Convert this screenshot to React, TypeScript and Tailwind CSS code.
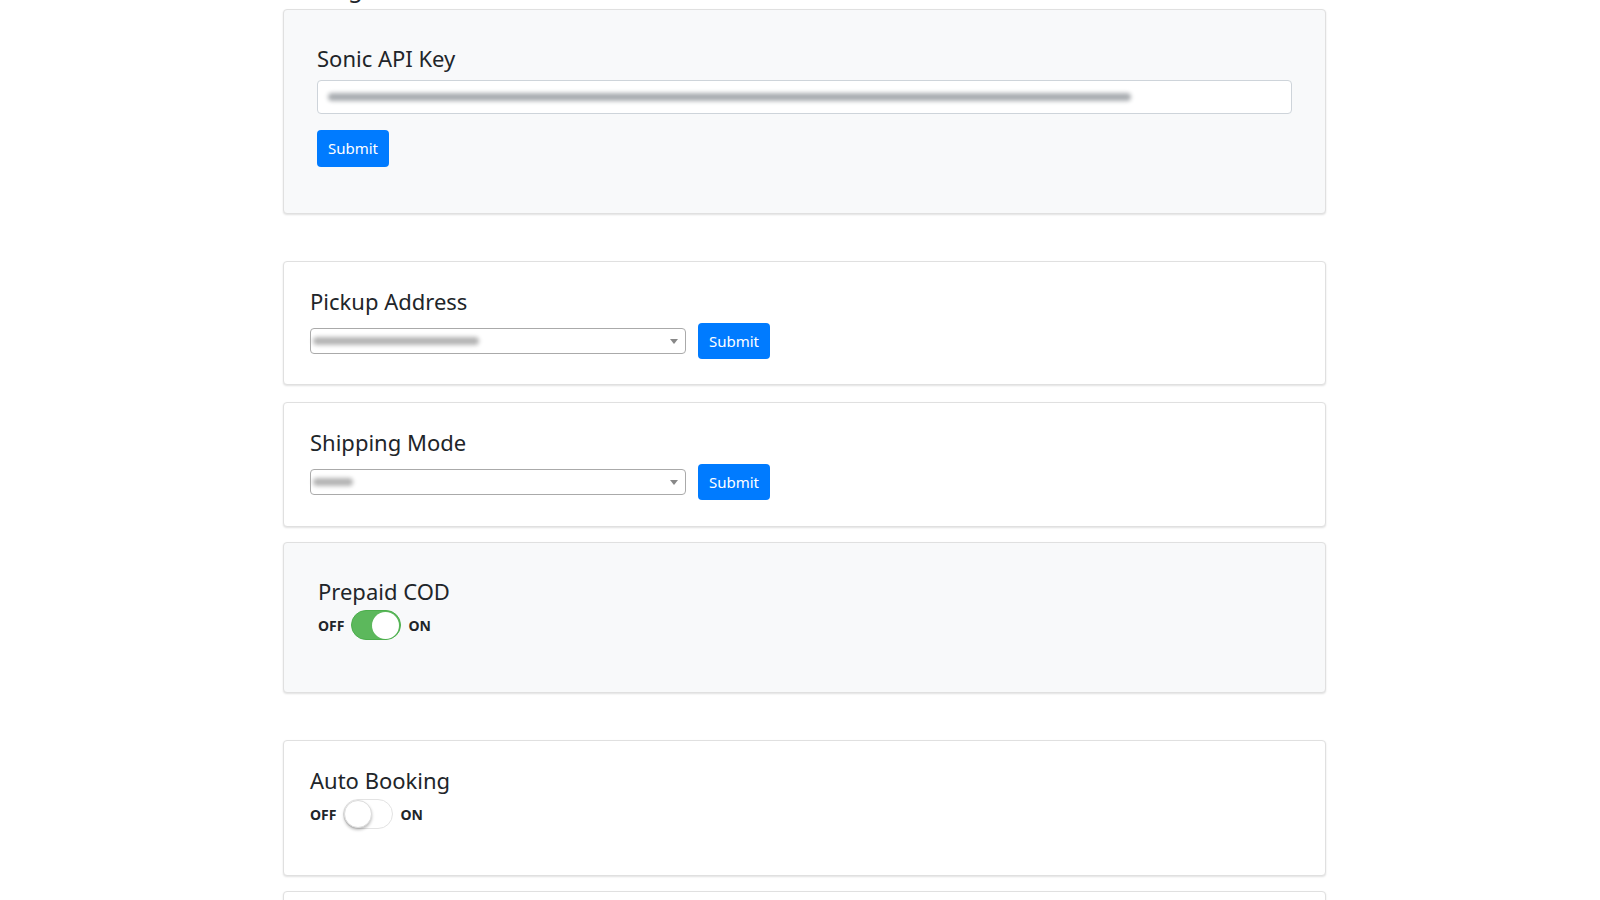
import React from "react";

const font = { fontFamily: '"Noto Sans", "Open Sans", sans-serif' };

function Blur({ w }: { w: string }) {
  return <div className={`h-[8px] ${w} rounded-full bg-[#a9adb1] blur-[2px]`} />;
}

function SubmitButton() {
  return (
    <button className="h-[36px] w-[72px] rounded-[4px] bg-[#007bff] text-[15px] text-white">
      Submit
    </button>
  );
}

function SelectBox({ blur }: { blur: string }) {
  return (
    <div className="flex h-[26px] w-[376px] items-center justify-between rounded-[4px] border border-[#aaaaaa] bg-white pl-[2px] pr-[7px]">
      <div className={`h-[8px] ${blur} rounded-full bg-[#b4b4b4] blur-[2px]`} />
      <div className="h-0 w-0 border-x-[4px] border-t-[5px] border-x-transparent border-t-[#888888]" />
    </div>
  );
}

function Toggle({ on }: { on: boolean }) {
  return (
    <div className="-mt-[3px] flex items-center text-[14px] font-bold text-[#212529]">
      <span>OFF</span>
      <div
        className={
          on
            ? "mx-[7px] flex h-[30px] w-[50px] items-center justify-end rounded-full border border-[#4cae4c] bg-[#5cb85c] px-[1px]"
            : "mx-[7px] flex h-[30px] w-[50px] items-center justify-start rounded-full border border-[#e3e3e3] bg-white"
        }
      >
        <div
          className={
            on
              ? "h-[27px] w-[27px] rounded-full bg-white"
              : "h-[28px] w-[28px] rounded-full border border-[#dcdcdc] bg-white shadow-[0_2px_3px_rgba(0,0,0,0.25)]"
          }
        />
      </div>
      <span>ON</span>
    </div>
  );
}

function Card({
  title,
  gray,
  className,
  children,
}: {
  title: string;
  gray?: boolean;
  className: string;
  children: React.ReactNode;
}) {
  return (
    <div
      className={`rounded-[4px] border border-[#e0e0e0] shadow-[0_1px_2px_rgba(0,0,0,0.12)] ${
        gray ? "bg-[#f8f9fa]" : "bg-white"
      } ${className}`}
    >
      <h3 className="mb-[8px] text-[22px] leading-[28px] text-[#212529]">{title}</h3>
      {children}
    </div>
  );
}

export default function App() {
  return (
    <div className="min-h-screen overflow-hidden bg-white" style={font}>
      <div className="ml-[283px] w-[1043px]">
        <h2 className="-mt-[26px] mb-[9px] h-[26px] text-[24px] leading-[28px] text-[#212529]">
          Settings
        </h2>

        <Card title="Sonic API Key" gray className="mb-[47px] h-[205px] px-[33px] pt-[34px]">
          <div className="flex h-[34px] w-[975px] items-center rounded-[4px] border border-[#ced4da] bg-white px-[10px]">
            <Blur w="w-[803px]" />
          </div>
          <div className="mt-[16px]">
            <button className="h-[37px] w-[72px] rounded-[4px] bg-[#007bff] text-[15px] text-white">
              Submit
            </button>
          </div>
        </Card>

        <Card title="Pickup Address" className="mb-[17px] h-[124px] px-[26px] pt-[25px]">
          <div className="flex items-center gap-[12px]">
            <SelectBox blur="w-[166px]" />
            <SubmitButton />
          </div>
        </Card>

        <Card title="Shipping Mode" className="mb-[15px] h-[125px] px-[26px] pt-[25px]">
          <div className="flex items-center gap-[12px]">
            <SelectBox blur="w-[40px]" />
            <SubmitButton />
          </div>
        </Card>

        <Card title="Prepaid COD" gray className="mb-[47px] h-[151px] px-[34px] pt-[34px]">
          <Toggle on />
        </Card>

        <Card title="Auto Booking" className="mb-[15px] h-[136px] px-[26px] pt-[25px]">
          <Toggle on={false} />
        </Card>

        <Card title="" className="h-[120px]">
          <div />
        </Card>
      </div>
    </div>
  );
}
